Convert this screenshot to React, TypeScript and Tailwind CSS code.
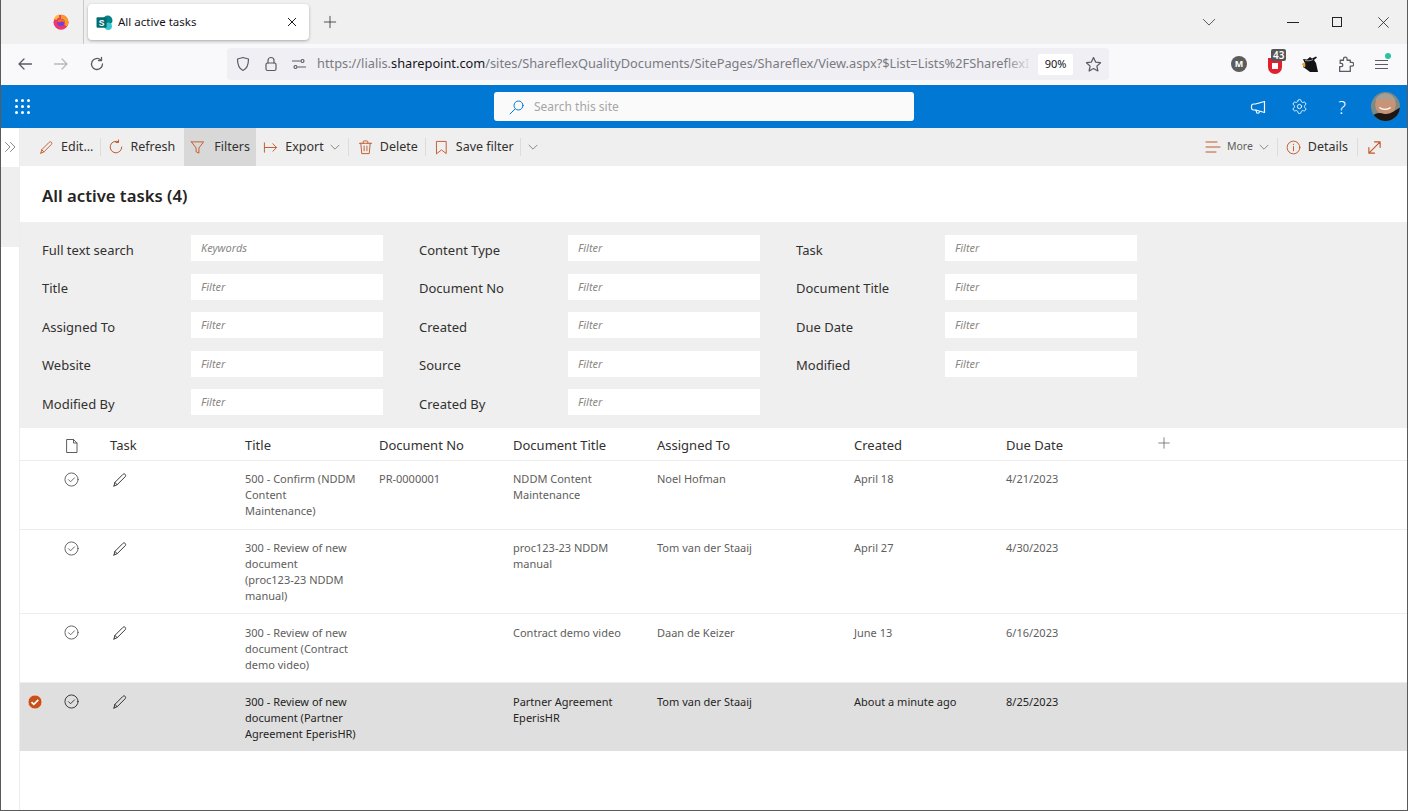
import React from "react";
import { Settings } from "lucide-react";

const S = ({ children, className = "", vb = "0 0 16 16" }: { children: React.ReactNode; className?: string; vb?: string }) => (
  <svg viewBox={vb} fill="none" stroke="currentColor" strokeWidth="1" strokeLinecap="round" strokeLinejoin="round" className={"shrink-0 " + className}>
    {children}
  </svg>
);

const Pencil = ({ className = "" }: { className?: string }) => (
  <S className={className}>
    <path d="M2 14l.9-3.6 8-8c.7-.7 1.7-.7 2.3 0 .6.6.6 1.6 0 2.3l-8 8L2 14z" />
    <path d="M2.9 10.4l2.3 2.3" />
  </S>
);

const Chevron = ({ className = "" }: { className?: string }) => (
  <S className={"w-[10px] h-[10px] text-[#8a8886] " + className} vb="0 0 10 10">
    <path d="M1 3.2l4 4 4-4" />
  </S>
);

const Sep = ({ className = "" }: { className?: string }) => <div className={"w-px h-[18px] bg-[#dcdcdc] " + className} />;

const fields = [
  [["Full text search", "Keywords"], ["Content Type", "Filter"], ["Task", "Filter"]],
  [["Title", "Filter"], ["Document No", "Filter"], ["Document Title", "Filter"]],
  [["Assigned To", "Filter"], ["Created", "Filter"], ["Due Date", "Filter"]],
  [["Website", "Filter"], ["Source", "Filter"], ["Modified", "Filter"]],
  [["Modified By", "Filter"], ["Created By", "Filter"]],
];

const rows = [
  { h: "h-[69px]", up: true, t: ["500 - Confirm (NDDM", "Content", "Maintenance)"], no: "PR-0000001", d: ["NDDM Content", "Maintenance"], a: "Noel Hofman", c: "April 18", due: "4/21/2023" },
  { h: "h-[84px]", up: true, t: ["300 - Review of new", "document", "(proc123-23 NDDM", "manual)"], no: "", d: ["proc123-23 NDDM", "manual"], a: "Tom van der Staaij", c: "April 27", due: "4/30/2023" },
  { h: "h-[69px]", t: ["300 - Review of new", "document (Contract", "demo video)"], no: "", d: ["Contract demo video"], a: "Daan de Keizer", c: "June 13", due: "6/16/2023" },
  { h: "h-[68px]", sel: true, t: ["300 - Review of new", "document (Partner", "Agreement EperisHR)"], no: "", d: ["Partner Agreement", "EperisHR"], a: "Tom van der Staaij", c: "About a minute ago", due: "8/25/2023" },
];

const cols = "grid grid-cols-[44px_46px_135px_134px_134px_144px_197px_152px_1fr]";

export default function App() {
  return (
    <div className="w-[1408px] h-[811px] overflow-hidden flex flex-col bg-white border-l border-r border-b border-[#5a5a5a] font-['Noto_Sans','Open_Sans',sans-serif] text-[#323130]">
      {/* tab strip */}
      <div className="h-[44px] shrink-0 bg-[#f0f0f0] flex items-center">
        <div className="w-[83px] h-full flex items-center justify-end border-r border-[#c8c8c8] pr-[14px]">
          <svg viewBox="0 0 16 16" className="w-[16px] h-[16px]">
            <circle cx="8" cy="8.200" r="7.500" fill="#f0366f" />
            <path d="M8 .7A7.500 7.500 0 0 1 15.500 8.200c0 1.500-.5 3-1.500 4.300L8 8.200z" fill="#ff9a1f" />
            <path d="M1 5c1-3 3-4.500 5.500-4.500C5.500 2 6 3 7 3.500 4.500 3.500 3.500 5 3.500 6z" fill="#ffbd2e" />
            <circle cx="8" cy="8.500" r="3.800" fill="#7b3fd4" />
            <path d="M4.200 7.500C5 5.500 7 4.800 9 5.200c2 .4 3 2.300 2.600 4.300C11 7.800 9.500 7.200 8 7.800c-1.500.5-2.800.5-3.800-.3z" fill="#ff6b1f" />
          </svg>
        </div>
        <div className="ml-[4px] w-[221px] h-[36px] bg-white rounded-[4px] shadow-[0_1px_3px_rgba(0,0,0,0.3)] flex items-center px-[8px]">
          <svg viewBox="0 0 16 16" className="w-[17px] h-[17px] shrink-0">
            <circle cx="11" cy="6" r="4.500" fill="#038387" />
            <circle cx="11.500" cy="11.500" r="3.500" fill="#37c6d0" />
            <rect x="0.5" y="3" width="9.500" height="10" rx="1" fill="#036c70" />
            <text x="5.200" y="11" fontSize="8" fill="white" textAnchor="middle" fontFamily="Liberation Sans" fontWeight="700">S</text>
          </svg>
          <span className="ml-[5px] text-[11.500px] text-[#15141a] whitespace-nowrap">All active tasks</span>
          <S className="ml-auto w-[12px] h-[12px] mr-[3px] text-[#15141a]"><path d="M3 3l10 10M13 3L3 13" strokeWidth="1.300" /></S>
        </div>
        <S className="ml-[14px] w-[14px] h-[14px] text-[#3c3c3c]"><path d="M8 1.500v13M1.500 8h13" /></S>
        <S className="ml-auto w-[14px] h-[14px] text-[#444]"><path d="M1.500 5l6.500 6.500L14.500 5" /></S>
        <div className="ml-[71px] w-[12px] h-px bg-[#222]" />
        <div className="ml-[33px] w-[10px] h-[10px] border border-[#222]" />
        <S className="ml-[35px] mr-[17px] w-[13px] h-[13px] text-[#222]"><path d="M2 2l12 12M14 2L2 14" /></S>
      </div>

      {/* nav bar */}
      <div className="h-[40px] shrink-0 bg-[#f9f9fb] flex items-center text-[#5b5b66]">
        <S className="ml-[16px] w-[16px] h-[16px] [stroke-width:1.300]"><path d="M14.500 8H2M7 3L2 8l5 5" /></S>
        <S className="ml-[20px] w-[16px] h-[16px] text-[#b8b8be] [stroke-width:1.300]"><path d="M1.500 8H14M9 3l5 5-5 5" /></S>
        <S className="ml-[20px] w-[16px] h-[16px] [stroke-width:1.300]"><path d="M13.500 8a5.500 5.500 0 1 1-1.800-4.100" /><path d="M12.500 1.500v3h-3" /></S>
        <div className="ml-[122px] w-[882px] h-[32px] bg-[#f0f0f4] rounded-[4px] flex items-center">
          <S className="ml-[8px] w-[16px] h-[16px] [stroke-width:1.200]"><path d="M8 1.500l5.500 1.500c0 5-1 9.500-5.500 11.500C3.500 12.500 2.500 8 2.500 3L8 1.500z" /></S>
          <S className="ml-[12px] w-[16px] h-[16px] [stroke-width:1.200]"><rect x="3" y="7" width="10" height="7.500" rx="1.500" /><path d="M5 7V4.500a3 3 0 0 1 6 0V7" /></S>
          <S className="ml-[12px] w-[16px] h-[16px] [stroke-width:1.200]"><circle cx="11.500" cy="5" r="1.500" /><path d="M1.500 5h7.500" /><circle cx="4.500" cy="11" r="1.500" /><path d="M7 11h7.500" /></S>
          <div className="relative ml-[10px] w-[716px] whitespace-nowrap text-[12.800px] text-[#7a7a82]">
            https://lialis.<span className="text-[#15141a]">sharepoint.com</span>/sites/ShareflexQualityDocuments/SitePages/Shareflex/View.aspx?$List=Lists%2FShareflexI
            <div className="absolute right-0 top-0 bottom-0 w-[28px] bg-gradient-to-r from-transparent to-[#f0f0f4]" />
          </div>
          <div className="ml-[5px] w-[35px] h-[21px] bg-white rounded-[2px] flex items-center justify-center text-[11px] text-[#15141a]">90%</div>
          <S className="ml-[12px] w-[17px] h-[17px] [stroke-width:1.200]"><path d="M8 1.500l2 4.200 4.600.6-3.400 3.200.9 4.600L8 11.800l-4.100 2.300.9-4.600L1.400 6.300 6 5.700 8 1.500z" /></S>
        </div>
        <div className="ml-[122px] w-[16px] h-[16px] rounded-full bg-[#5c5c5c] flex items-center justify-center text-white text-[9px] font-bold">M</div>
        <div className="relative ml-[21px] mt-[4px] w-[14px] h-[16px] bg-[#e0202c] rounded-b-[7px] flex items-center justify-center">
          <div className="w-[6px] h-[6px] bg-white" />
          <div className="absolute top-[-9px] left-[3px] px-[2px] bg-[#555] rounded-[2px] text-white text-[10px] leading-[12px] font-semibold">43</div>
        </div>
        <svg viewBox="0 0 18 18" className="ml-[19px] w-[18px] h-[18px]">
          <path d="M2 4l4 .5L9 2l2 1.500L15 1.500l1 1-3 2.500 2 3 2 9H9L5 14l-3-2 2-3z" fill="#141414" />
          <path d="M0.500 9L4 7l.5 4-1 1.500z" fill="#e8a33d" />
          <path d="M4 5.500c2 .5 6 .5 8-1" stroke="#f9f9fb" strokeWidth="0.6" fill="none" />
        </svg>
        <S className="ml-[18px] w-[17px] h-[17px] [stroke-width:1.200]"><path d="M2.500 14.500h10v-5h1.500a1.700 1.700 0 0 0 0-3.400h-1.500V4H9.500V2.800a1.700 1.700 0 0 0-3.400 0V4H3v3h1a1.500 1.500 0 0 1 0 3H2.500z" /></S>
        <div className="relative ml-[21px] w-[13px] flex flex-col gap-[3px] mt-[1px]">
          <div className="h-px bg-[#5b5b66]" /><div className="h-px bg-[#5b5b66]" /><div className="h-px bg-[#5b5b66]" />
          <div className="absolute top-[-7px] right-[-3px] w-[6px] h-[6px] rounded-full bg-[#2ac3a2]" />
        </div>
      </div>

      {/* suite bar */}
      <div className="h-[43px] shrink-0 mt-px bg-[#0078d4] flex items-center relative text-white">
        <div className="ml-[14px] grid grid-cols-3 gap-[3px]">
          {Array.from({ length: 9 }).map((_, i) => <div key={i} className="w-[3px] h-[3px] rounded-full bg-white" />)}
        </div>
        <div className="ml-[464px] w-[420px] h-[29px] bg-[#fafafa] rounded-[3px] flex items-center">
          <S className="ml-[15px] w-[16px] h-[16px] text-[#0078d4]"><circle cx="9.500" cy="6.500" r="4.500" /><path d="M6 10l-5 5" /></S>
          <span className="ml-[9px] text-[12px] text-[#a6a6a6]">Search this site</span>
        </div>
        <S className="ml-auto w-[16px] h-[16px] [stroke-width:1.200]"><path d="M14.500 2.500v11L5.500 11h-2a2 2 0 0 1-2-2V7a2 2 0 0 1 2-2h2z" /><path d="M6 11.200l.4 1.500a1.500 1.500 0 0 0 3 .1" /></S>
        <Settings className="ml-[25px] w-[17px] h-[17px] shrink-0" strokeWidth={1.250} />
        <span className="ml-[30px] text-[18px] font-light leading-none">?</span>
        <svg viewBox="0 0 28 28" className="ml-[25px] mr-[7px] w-[29px] h-[29px] rounded-full shrink-0">
          <rect width="28" height="28" fill="#7d8a84" />
          <ellipse cx="14" cy="12" rx="10" ry="10.500" fill="#c89478" />
          <path d="M0 28c0-6 6-9 12-7 6 1 8-1 16-6v13z" fill="#1d1613" />
          <path d="M8 15c3 2.500 8 2.500 11 0" stroke="#fff" strokeWidth="1.200" fill="none" />
          <path d="M4 8c2-4 6-6.500 10-6.500 4 0 7 2 10 6.500-5-2-14-2-20 0z" fill="#a3a09a" />
        </svg>
      </div>

      {/* body */}
      <div className="flex-1 flex min-h-0">
        {/* rail */}
        <div className="w-[18px] shrink-0 flex flex-col">
          <div className="h-[39px] bg-white flex items-center justify-center text-[#8a8886]">
            <S className="w-[12px] h-[12px] -mt-[2px]" vb="0 0 12 12"><path d="M1.500 1.500L6 6l-4.500 4.500M6.500 1.500L11 6l-4.500 4.500" /></S>
          </div>
          <div className="h-[80px] bg-[#efefef]" />
        </div>

        {/* main */}
        <div className="flex-1 flex flex-col min-w-0 border-l border-[#ededed]">
          {/* command bar */}
          <div className="h-[38px] shrink-0 bg-[#efefef] flex items-center text-[12.500px] whitespace-nowrap">
            <Pencil className="ml-[19px] w-[15px] h-[15px] text-[#c2582a]" />
            <span className="ml-[7px]">Edit...</span>
            <Sep className="ml-[7px]" />
            <S className="ml-[7px] w-[16px] h-[16px] text-[#c2582a]"><path d="M13.800 8A5.800 5.800 0 1 1 10.500 2.800" /><path d="M10.500 1v2.500h-2.500" /></S>
            <span className="ml-[6px]">Refresh</span>
            <div className="ml-[9px] w-[72px] h-full bg-[#d8d8d8] flex items-center pl-[6px]">
              <S className="w-[15px] h-[15px] text-[#c2582a]"><path d="M1.500 2h13L9.500 8.500V14l-3-1.500v-4L1.500 2z" /></S>
              <span className="ml-[9px]">Filters</span>
            </div>
            <S className="ml-[7px] w-[15px] h-[15px] text-[#c2582a]"><path d="M1.500 3v10M1.500 8h13M10.500 4l4 4-4 4" /></S>
            <span className="ml-[7px]">Export</span>
            <Chevron className="ml-[6px]" />
            <Sep className="ml-[8px]" />
            <S className="ml-[9px] w-[15px] h-[15px] text-[#c2582a]"><path d="M1.500 3.500h13M5.500 3.500V2a1 1 0 0 1 1-1h3a1 1 0 0 1 1 1v1.500M3 3.500l1 11h8l1-11M6.500 6.500v5M9.500 6.500v5" /></S>
            <span className="ml-[7px]">Delete</span>
            <Sep className="ml-[7px]" />
            <S className="ml-[8px] w-[15px] h-[15px] text-[#c2582a]"><path d="M3 1.500h10v13L8 10.500l-5 4z" /></S>
            <span className="ml-[7px]">Save filter</span>
            <Sep className="ml-[6px]" />
            <Chevron className="ml-[7px]" />
            <div className="ml-auto flex items-center">
              <S className="w-[16px] h-[16px] text-[#c2582a]"><path d="M1 3h11M1 8h14M1 13h10" /></S>
              <span className="ml-[6px] text-[10.500px] text-[#605e5c]">More</span>
              <Chevron className="ml-[6px]" />
              <Sep className="ml-[8px]" />
              <S className="ml-[8px] w-[15px] h-[15px] text-[#c2582a]"><circle cx="8" cy="8" r="6.800" /><path d="M8 4.500v.4M8 7v4.500" /></S>
              <span className="ml-[7px]">Details</span>
              <Sep className="ml-[9px]" />
              <S className="ml-[9px] mr-[25px] w-[15px] h-[15px] text-[#c2582a] [stroke-width:1.200]"><path d="M2 14L14 2M8 2h6v6M2 8v6h6" /></S>
            </div>
          </div>

          {/* title */}
          <div className="h-[56px] shrink-0 flex items-center pl-[22px] pt-[4px] text-[16.700px] font-semibold text-[#252423]">All active tasks (4)</div>

          {/* filters */}
          <div className="h-[206px] shrink-0 bg-[#efefef] pt-[13px] pl-[22px] flex flex-col gap-[12.500px]">
            {fields.map((row, i) => (
              <div key={i} className="flex h-[26px]">
                {row.map(([label, ph], j) => (
                  <div key={j} className="w-[377px] flex items-center shrink-0">
                    <span className="w-[149px] pt-[5px] text-[13px] text-[#323130]">{label}</span>
                    <div className="w-[192px] h-[26px] bg-white flex items-center pl-[10px] pt-px text-[11px] italic text-[#8a8886]">{ph}</div>
                  </div>
                ))}
              </div>
            ))}
          </div>

          {/* header */}
          <div className={cols + " h-[32px] shrink-0 items-center border-b border-[#ededed] pt-[2px] text-[13px] text-[#323130] mt-[1px]"}>
            <div />
            <S className="w-[16px] h-[16px] text-[#605e5c]"><path d="M3 1.500h6.500l3.500 3.500v9.500H3zM9.500 1.500V5H13" /></S>
            <div>Task</div>
            <div>Title</div>
            <div>Document No</div>
            <div>Document Title</div>
            <div>Assigned To</div>
            <div>Created</div>
            <div className="flex items-center">
              <span className="w-[152px]">Due Date</span>
              <S className="w-[12px] h-[12px] -mt-[5px] text-[#605e5c]"><path d="M8 1v14M1 8h14" /></S>
            </div>
          </div>

          {/* rows */}
          {rows.map((r, i) => {
            const up = r.up ? "-mt-px" : "";
            return (
              <div key={i} className={cols + " " + r.h + " shrink-0 pt-[11px] text-[11px] leading-[16px] " + (r.sel ? "bg-[#dfdfdf] text-[#252423]" : "border-b border-[#ededed] text-[#605e5c]")}>
                <div className="pl-[7px]">
                  {r.sel && (
                    <svg viewBox="0 0 16 16" className="w-[16px] h-[16px]">
                      <circle cx="8" cy="8" r="7" fill="#c8511b" stroke="#f7e3d8" strokeWidth="0.8" />
                      <path d="M4.500 8.200l2.300 2.200 4.500-4.500" fill="none" stroke="#fff" strokeWidth="1.700" />
                    </svg>
                  )}
                </div>
                <S className={"w-[15px] h-[15px] " + (r.sel ? "text-[#323130]" : "text-[#605e5c]")}><circle cx="8" cy="8" r="7" /><path d="M4.800 8.200l2.200 2.200 4.200-4.200" /></S>
                <div className="pl-[2px]"><Pencil className={"w-[16px] h-[16px] " + (r.sel ? "text-[#323130]" : "text-[#3b3a39]")} /></div>
                <div className={up}>{r.t.map((l) => <div key={l} className="whitespace-nowrap">{l}</div>)}</div>
                <div className={up}>{r.no}</div>
                <div className={up}>{r.d.map((l) => <div key={l} className="whitespace-nowrap">{l}</div>)}</div>
                <div className={up}>{r.a}</div>
                <div className={up}>{r.c}</div>
                <div className={up}>{r.due}</div>
              </div>
            );
          })}
          <div className="flex-1" />
        </div>
      </div>
    </div>
  );
}
